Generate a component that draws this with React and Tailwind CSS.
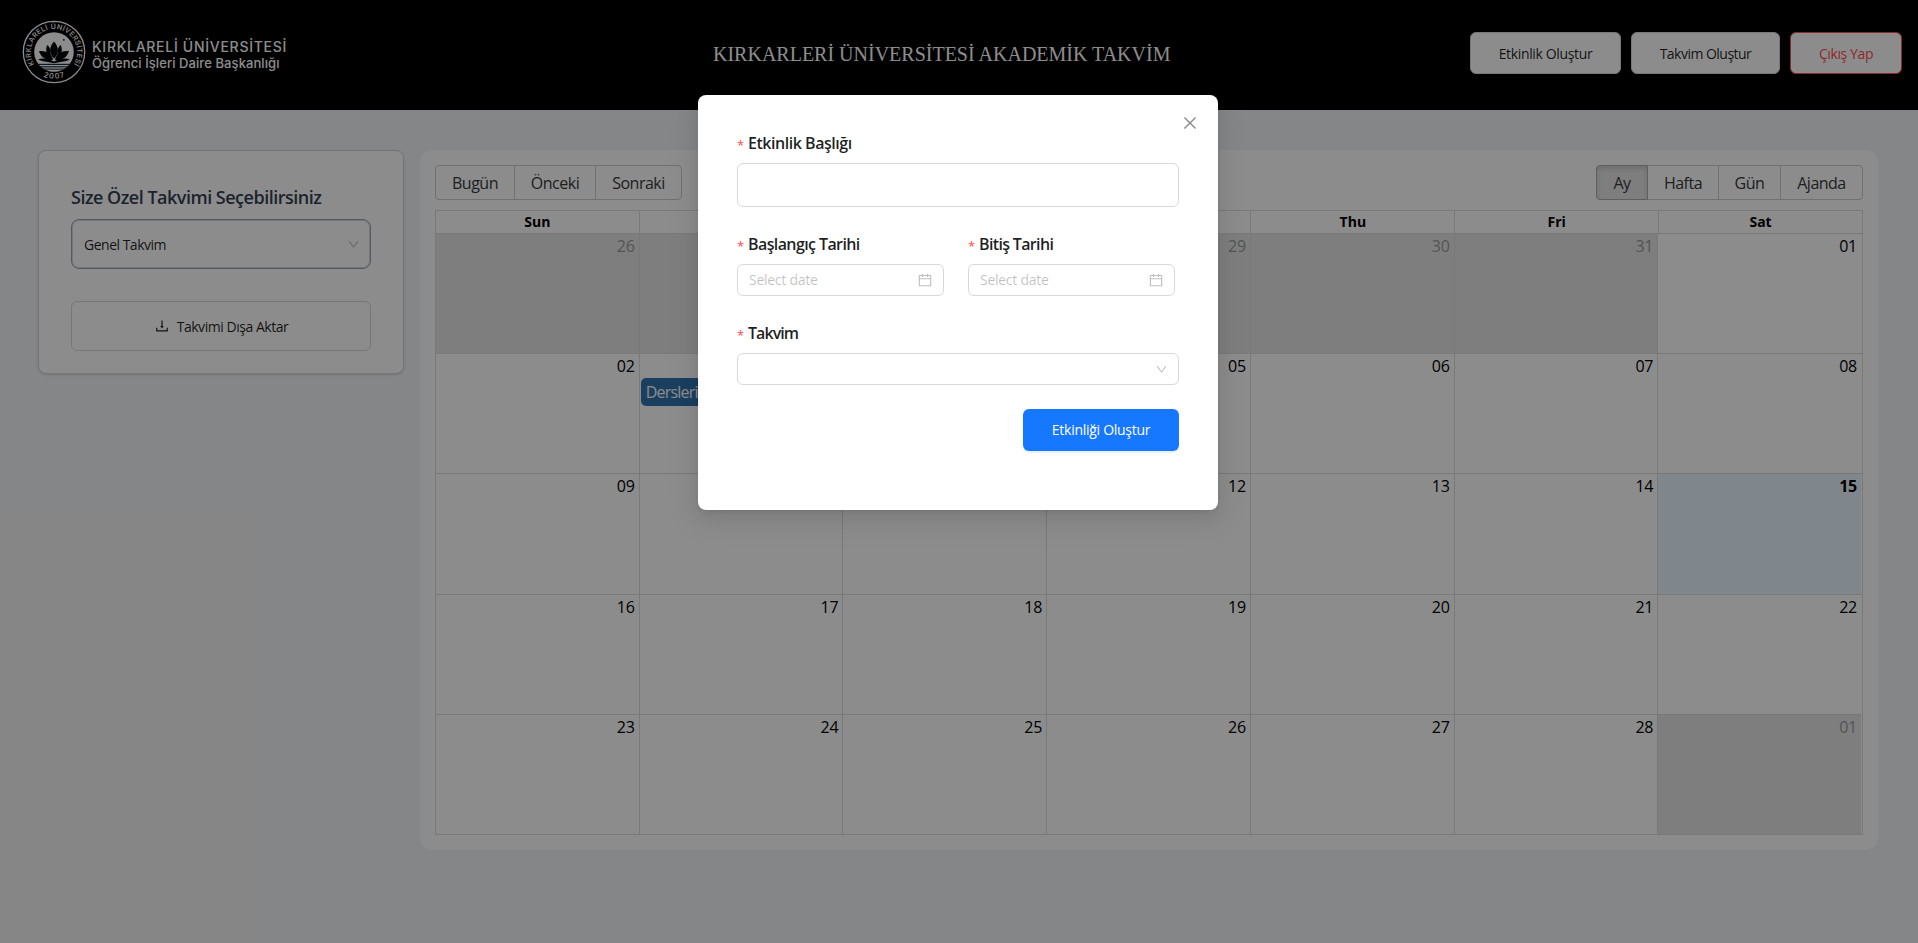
import {
  AiOutlineCalendar,
  AiOutlineClose,
  AiOutlineDown,
  AiOutlineDownload,
} from "react-icons/ai";

const WEEKDAYS = ["Sun", "Mon", "Tue", "Wed", "Thu", "Fri", "Sat"];

const WEEKS = [
  { height: "h-[119px]", days: ["26", "27", "28", "29", "30", "31", "01"], off: [0, 1, 2, 3, 4, 5] },
  { height: "h-[119px]", days: ["02", "03", "04", "05", "06", "07", "08"], off: [], event: "Dersleri" },
  { height: "h-[120px]", days: ["09", "10", "11", "12", "13", "14", "15"], off: [], today: 6 },
  { height: "h-[119px]", days: ["16", "17", "18", "19", "20", "21", "22"], off: [] },
  { height: "h-[119px]", days: ["23", "24", "25", "26", "27", "28", "01"], off: [6] },
];

function Logo() {
  return (
    <svg viewBox="0 0 64 64" className="mb-[6px] h-16 w-16 shrink-0">
      <defs>
        <path id="arcTop" d="M12.5 44.8 A23.2 23.2 0 1 1 51.5 44.8" />
        <path id="arcBottom" d="M12 50.4 A28.2 28.2 0 0 0 52 50.4" />
      </defs>
      <circle cx="32" cy="32" r="30.7" fill="#000" stroke="#fff" strokeWidth="1.3" />
      <circle cx="32" cy="32" r="19.8" fill="#fff" />
      <text fill="#fff" fontFamily="Inter, sans-serif" fontSize="7" fontWeight="500">
        <textPath href="#arcTop" startOffset="50%" textAnchor="middle" textLength="98">
          KIRKLARELİ ÜNİVERSİTESİ
        </textPath>
      </text>
      <text fill="#fff" fontFamily="Inter, sans-serif" fontSize="7.4" fontWeight="500">
        <textPath href="#arcBottom" startOffset="50%" textAnchor="middle" textLength="22">
          2007
        </textPath>
      </text>
      <g fill="#05080c">
        <path d="M32 21.4 C36.8 27 37.6 33 32 38.6 C26.4 33 27.2 27 32 21.4Z" />
        <path d="M25.2 25 C27 26.2 28 28 28.2 30 C28 33.4 29 36 31.2 39 C25.2 37 22.6 31.6 25.2 25Z" />
        <path d="M38.8 25 C37 26.2 36 28 35.8 30 C36 33.4 35 36 32.8 39 C38.8 37 41.4 31.6 38.8 25Z" />
        <path d="M17 31.2 C23.4 30.2 28.6 33.4 31 39.8 C25 40.8 19.2 38 17 31.2Z" />
        <path d="M47 31.2 C40.6 30.2 35.4 33.4 33 39.8 C39 40.8 44.8 38 47 31.2Z" />
        <path d="M16 39.4 C21 37.6 27 38.8 32 41.4 C37 38.8 43 37.6 48 39.4 C43 41.8 37 42 32 43.2 C27 42 21 41.8 16 39.4Z" />
        <circle cx="41.8" cy="19.8" r="0.9" />
      </g>
      <g fill="#1f2d3d">
        <rect x="15.4" y="43.8" width="33.2" height="1.2" />
        <rect x="17.6" y="46.2" width="28.8" height="1.2" />
        <rect x="21" y="48.6" width="22" height="1.1" />
      </g>
    </svg>
  );
}

function Header() {
  return (
    <header className="flex h-[110px] items-center bg-black pr-4 pl-[22px]">
      <div className="flex w-[691px] items-center">
        <Logo />
        <div className="-mt-px ml-[6px] font-['Inter'] font-medium text-white">
          <p className="h-[17px] text-[14px] leading-[17px] tracking-[0.72px] whitespace-nowrap">
            KIRKLARELİ ÜNİVERSİTESİ
          </p>
          <p className="h-[17px] text-[13px] leading-[17px] tracking-[0.08px] whitespace-nowrap">
            Öğrenci İşleri Daire Başkanlığı
          </p>
        </div>
      </div>
      <h1 className="-mt-[3px] flex-1 font-['Liberation_Serif'] text-[20px] leading-7 whitespace-nowrap text-white">
        KIRKARLERİ ÜNİVERSİTESİ AKADEMİK TAKVİM
      </h1>
      <div className="-mt-1 flex gap-[10px] text-[14px] text-black/88">
        <button className="h-[42px] w-[151px] rounded-md border border-[#d9d9d9] bg-white tracking-[-0.35px]">
          Etkinlik Oluştur
        </button>
        <button className="h-[42px] w-[149px] rounded-md border border-[#d9d9d9] bg-white tracking-[-0.52px]">
          Takvim Oluştur
        </button>
        <button className="h-[42px] w-[112px] rounded-md border border-[#ff4d4f] bg-white tracking-[-0.4px] text-[#ff4d4f]">
          Çıkış Yap
        </button>
      </div>
    </header>
  );
}

function Sidebar() {
  return (
    <aside className="h-[224px] w-[366px] rounded-lg border border-gray-300 bg-white px-8 pt-8 shadow-sm">
      <h2 className="mb-2 h-7 text-[18px] leading-7 font-semibold tracking-[-0.5px] whitespace-nowrap text-gray-700">
        Size Özel Takvimi Seçebilirsiniz
      </h2>
      <div className="flex h-[50px] items-center justify-between rounded-lg border border-gray-400 bg-white pr-[10px] pl-3 shadow-[inset_0_0_0_1px_#d9d9d9]">
        <span className="text-[14px] tracking-[-0.5px] text-black/88">Genel Takvim</span>
        <AiOutlineDown className="h-[13px] w-[13px] text-black/25" />
      </div>
      <button className="mt-8 flex h-[50px] w-full items-center justify-center gap-[7px] rounded-md border border-[#d9d9d9] bg-white text-[14px] tracking-[-0.46px] text-black/88">
        <AiOutlineDownload className="h-4 w-4" />
        <span>Takvimi Dışa Aktar</span>
      </button>
    </aside>
  );
}

function Toolbar() {
  const base = "h-[35px] border border-[#ccc] text-center";
  return (
    <div className="mb-[10px] flex justify-between text-[16px] tracking-[-0.5px] text-[#373a3c]">
      <div className="flex">
        <button className={`${base} w-20 rounded-l`}>Bugün</button>
        <button className={`${base} -ml-px w-[82px]`}>Önceki</button>
        <button className={`${base} -ml-px w-[87px] rounded-r`}>Sonraki</button>
      </div>
      <div className="flex">
        <button className="relative h-[35px] w-[52px] rounded-l border border-[#adadad] bg-[#e6e6e6] shadow-[inset_0_3px_5px_rgba(0,0,0,0.125)]">
          Ay
        </button>
        <button className={`${base} -ml-px w-[72px]`}>Hafta</button>
        <button className={`${base} -ml-px w-[63px]`}>Gün</button>
        <button className={`${base} -ml-px w-[83px] rounded-r`}>Ajanda</button>
      </div>
    </div>
  );
}

function Week({ week, first }) {
  return (
    <div className={first ? "" : "border-t border-[#ddd]"}>
      <div className={`flex pr-px ${week.height}`}>
        {week.days.map((day, i) => {
          const off = week.off.includes(i);
          const today = week.today === i;
          return (
            <div
              key={i}
              className={`min-w-0 flex-1 border-[#ddd] ${i > 0 ? "border-l" : ""} ${
                off ? "bg-[#e6e6e6] text-[#999]" : today ? "bg-[#eaf6ff] font-bold" : ""
              }`}
            >
              <div className="h-6 pr-1 text-right text-[16px] leading-6 tracking-[-0.2px]">{day}</div>
              {week.event && i === 1 && (
                <div className="mx-px h-7 rounded-[5px] bg-[#3174ad] px-[5px] text-[16px] leading-7 tracking-[-0.8px] text-white">
                  {week.event}
                </div>
              )}
            </div>
          );
        })}
      </div>
    </div>
  );
}

function Calendar() {
  return (
    <section className="h-[700px] w-[1458px] rounded-xl bg-white p-[15px]">
      <Toolbar />
      <div className="border border-[#ddd] text-black">
        <div className="flex h-[23px] border-b border-[#ddd]">
          {WEEKDAYS.map((name, i) => (
            <div
              key={name}
              className={`flex-1 border-[#ddd] text-center text-[14px] leading-[21px] font-bold ${
                i > 0 ? "border-l" : ""
              }`}
            >
              {name}
            </div>
          ))}
        </div>
        {WEEKS.map((week, i) => (
          <Week key={i} week={week} first={i === 0} />
        ))}
      </div>
    </section>
  );
}

function Label({ children, className }) {
  return (
    <div className="flex h-6 items-center text-[16px] leading-6 font-semibold whitespace-nowrap text-black/88">
      <span className="mt-1 w-[11px] text-[13px] font-normal text-[#ff4d4f]">*</span>
      <span className={className}>{children}</span>
    </div>
  );
}

function DateField() {
  return (
    <div className="mt-2 flex h-8 w-[207px] items-center justify-between rounded-md border border-[#d9d9d9] pr-[10px] pl-[11px]">
      <span className="-mt-px text-[14px] tracking-[-0.27px] text-black/25">Select date</span>
      <AiOutlineCalendar className="h-4 w-4 text-black/25" />
    </div>
  );
}

function Modal() {
  return (
    <div className="absolute inset-0 bg-black/45 pt-[95px] pl-[698px]">
      <div className="relative h-[415px] w-[520px] rounded-lg bg-white pt-9 pr-[39px] pl-[39px] shadow-[0_6px_16px_0_rgba(0,0,0,0.08),0_3px_6px_-4px_rgba(0,0,0,0.12),0_9px_28px_8px_rgba(0,0,0,0.05)]">
        <AiOutlineClose className="absolute top-[19px] right-[19px] h-[18px] w-[18px] text-black/45" />
        <Label className="tracking-[-0.47px]">Etkinlik Başlığı</Label>
        <div className="mt-2 h-11 rounded-md border border-[#d9d9d9]" />
        <div className="mt-[25px] flex gap-6">
          <div>
            <Label className="tracking-[-0.6px]">Başlangıç Tarihi</Label>
            <DateField />
          </div>
          <div>
            <Label className="tracking-[-0.65px]">Bitiş Tarihi</Label>
            <DateField />
          </div>
        </div>
        <div className="mt-[25px]">
          <Label className="tracking-[-0.95px]">Takvim</Label>
        </div>
        <div className="mt-2 flex h-8 items-center justify-end rounded-md border border-[#d9d9d9] pr-[10px]">
          <AiOutlineDown className="h-[13px] w-[13px] text-black/25" />
        </div>
        <div className="mt-6 flex justify-end">
          <button className="h-[42px] w-[156px] rounded-md bg-[#1677ff] pb-px text-[14px] font-medium tracking-[-0.28px] text-white shadow-[0_2px_0_rgba(5,145,255,0.1)]">
            Etkinliği Oluştur
          </button>
        </div>
      </div>
    </div>
  );
}

export default function App() {
  return (
    <div className="relative h-[943px] overflow-hidden bg-gray-100 font-['Open_Sans',sans-serif]">
      <Header />
      <main className="flex items-start gap-4 pt-10 pl-[38px]">
        <Sidebar />
        <Calendar />
      </main>
      <Modal />
    </div>
  );
}
